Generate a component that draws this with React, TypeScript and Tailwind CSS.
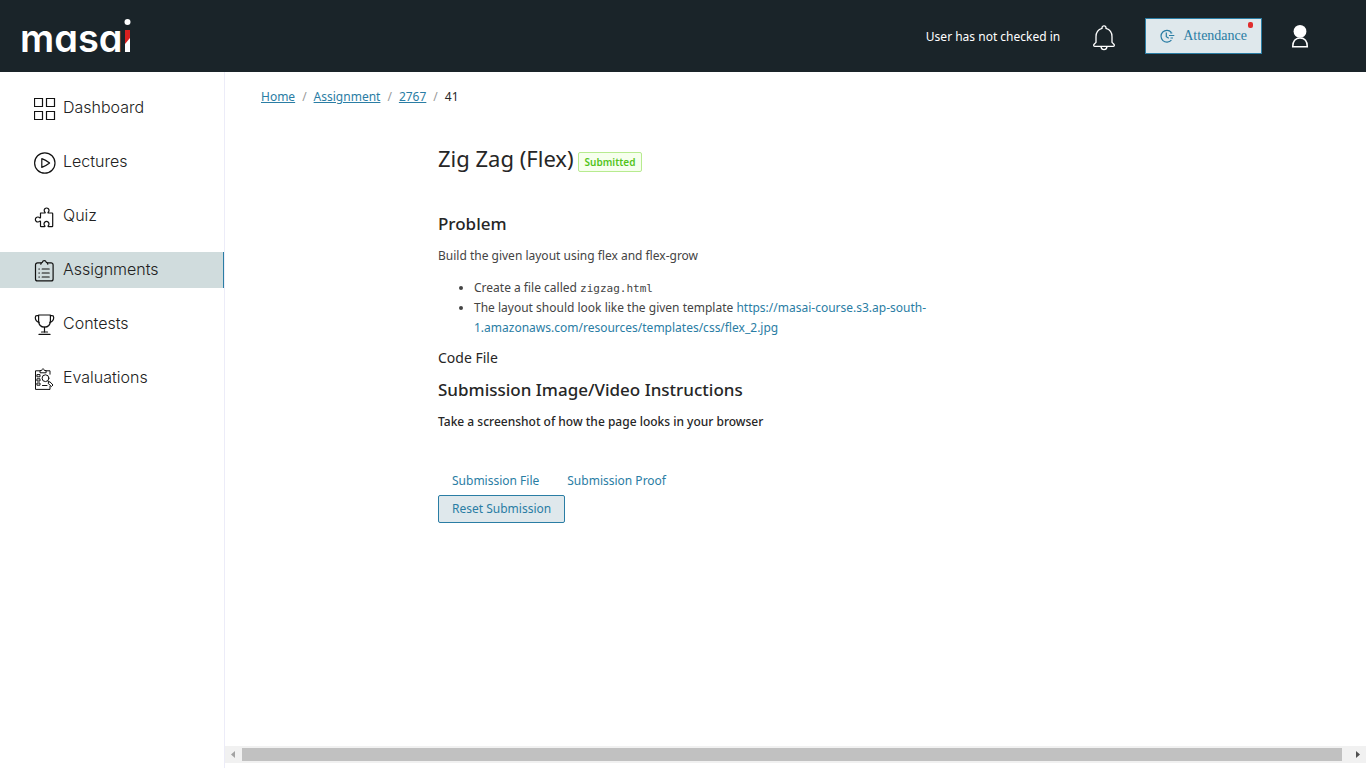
import type { ReactNode } from "react";

type IconProps = { children: ReactNode };

function Icon({ children }: IconProps) {
  return (
    <svg
      viewBox="0 0 22 22"
      className="size-[22px] shrink-0"
      fill="none"
      stroke="currentColor"
      strokeWidth="1.2"
      strokeLinecap="round"
      strokeLinejoin="round"
      aria-hidden="true"
    >
      {children}
    </svg>
  );
}

const DashboardIcon = () => (
  <Icon>
    <g strokeLinejoin="miter">
      <path d="M.5.5h8v8h-8zM12.500.5h8v8h-8zM.5 13.500h8v8h-8zM12.500 13.500h8v8h-8z" />
    </g>
  </Icon>
);

const LecturesIcon = () => (
  <Icon>
    <circle cx="10.800" cy="11" r="10.200" />
    <path d="M7.800 6.600v8.800c2.800-1 5.200-2.400 7.800-4.400C13 9 10.600 7.600 7.800 6.600z" />
  </Icon>
);

const QuizIcon = () => (
  <Icon>
    <path d="M6.500 7h4.200c.5 0 .7-.4.3-.8a2.400 2.400 0 1 1 3.200 0c-.4.4-.2.800.3.800h3.500c.4 0 .7.300.7.700v12.200c0 .4-.3.700-.7.700h-3.500c-.5 0-.7-.4-.3-.8a2.500 2.500 0 1 0-3.400 0c.4.4.2.800-.3.800H7.200c-.4 0-.7-.3-.7-.7v-4.400c0-.5-.4-.7-.8-.3a2.500 2.500 0 1 1 0-3.400c.4.4.8.200.8-.3z" />
  </Icon>
);

const AssignmentsIcon = () => (
  <Icon>
    <path d="M7 2.900H3.500a2 2 0 0 0-2 2v14a2 2 0 0 0 2 2h13.600a2 2 0 0 0 2-2v-14a2 2 0 0 0-2-2h-3.500" />
    <path d="M6.800 4.200c0-1.200.5-1.800 1.500-1.900C8.600 1.200 9.400.6 10.300.6s1.700.6 2 1.700c1 .1 1.500.7 1.500 1.900" />
    <path d="M8.200 9h7M8.200 13h7M8.200 17h7M4.900 9h.5M4.900 13h.5M4.900 17h.5" />
  </Icon>
);

const ContestsIcon = () => (
  <Icon>
    <path d="M4.600 1h11.800v6c0 3.800-2.200 6.200-5.900 6.200S4.600 10.800 4.600 7z" />
    <path d="M4.600 1.600H3c-1.100 0-1.700.7-1.700 1.800 0 2.700 1.400 4.200 3.900 5M16.400 1.600H18c1.100 0 1.700.7 1.700 1.800 0 2.700-1.400 4.200-3.900 5" />
    <path d="M10.500 13.200v5M7.500 18h6M5 20.400h11" />
  </Icon>
);

const EvaluationsIcon = () => (
  <Icon>
    <g strokeWidth="1">
      <path d="M6 2.800H1.500v18.600H16v-3M12 2.800h4v3.400" />
      <path d="M6 4.400V2.500h1.700C8 1.400 8.400.8 9 .8s1.100.6 1.400 1.700h1.700v1.900z" />
      <circle cx="11.500" cy="10.200" r="3.400" />
      <path d="m13.800 12.900 1.200 1.200m-.8.800 1.400-1.400 3.400 3.500-1.300 1.300z" />
      <path d="M3.300 6.600h2.700v2.200H3.300zM3.300 10.800h2.700V13H3.300zM3.300 15h2.700v2.200H3.300zM8.500 17.500H13" />
    </g>
  </Icon>
);

const navItems = [
  { label: "Dashboard", icon: <DashboardIcon />, active: false },
  { label: "Lectures", icon: <LecturesIcon />, active: false },
  { label: "Quiz", icon: <QuizIcon />, active: false },
  { label: "Assignments", icon: <AssignmentsIcon />, active: true },
  { label: "Contests", icon: <ContestsIcon />, active: false },
  { label: "Evaluations", icon: <EvaluationsIcon />, active: false },
];

function Logo() {
  return (
    <a href="#" aria-label="masai" className="flex items-end pt-1 text-white">
      <span className="font-['Inter',sans-serif] text-[38px] leading-10 font-semibold [font-feature-settings:'cv11']">
        masa
      </span>
      <svg viewBox="0 0 8 36" className="mb-1 h-9 w-2" aria-hidden="true">
        <circle cx="4.500" cy="4" r="3" fill="#fff" />
        <path d="M2 12h5v22H2z" fill="#fff" />
        <path d="M2 12h5v8l-5 6z" fill="#d9201f" />
      </svg>
    </a>
  );
}

function Header() {
  return (
    <header className="flex h-[72px] shrink-0 items-center justify-between bg-[#1a2429] pr-[57px] pl-5">
      <Logo />
      <div className="flex items-center text-white">
        <span className="pt-0.5 text-xs">User has not checked in</span>
        <button type="button" aria-label="Notifications" className="ml-8 pt-1">
          <svg
            viewBox="0 0 24 26"
            className="h-[26px] w-6"
            fill="none"
            stroke="currentColor"
            strokeWidth="1.3"
            strokeLinejoin="round"
            aria-hidden="true"
          >
            <path d="M10 3.400V2.800a2 2 0 0 1 4 0v.6c3.800 1.100 6 4.300 6 8.400v5.600l1.900 1.900c.9.900.3 2.100-.8 2.100H2.900c-1.100 0-1.700-1.200-.8-2.100L4 17.400v-5.600c0-4.100 2.200-7.300 6-8.400z" />
            <path d="M9 21.600c.2 1.900 1.300 3 3 3s2.800-1.100 3-3" />
          </svg>
        </button>
        <button
          type="button"
          className="relative ml-[29px] flex h-9 items-center gap-2 border border-[#2a7da4] bg-[#dfe8ec] px-3.5 font-['Liberation_Serif',serif] text-sm text-[#2a7da4]"
        >
          <svg
            viewBox="0 0 15 15"
            className="size-[15px]"
            fill="none"
            stroke="currentColor"
            strokeWidth="1.2"
            aria-hidden="true"
          >
            <path d="M11.300 3.300a5.900 5.900 0 1 0 .1 7.800M6.300 3.500v4.200l2.500 1.600M9 6.500h5.300M10.500 9h2.500M10.300 4h2" />
          </svg>
          Attendance
          <span className="absolute top-[3px] right-2 h-1.5 w-[5px] rounded-xs bg-[#e02d2d]" />
        </button>
        <button type="button" aria-label="Profile" className="ml-[29px]">
          <svg viewBox="0 0 18 24" className="h-6 w-[18px]" aria-hidden="true">
            <path
              d="M1.700 22.700c0-5.500 2.700-8.800 7.300-8.800s7.300 3.300 7.300 8.800z"
              fill="none"
              stroke="#fff"
              strokeWidth="1.5"
            />
            <circle cx="9" cy="7.400" r="6.400" fill="#fff" />
          </svg>
        </button>
      </div>
    </header>
  );
}

function Sidebar() {
  return (
    <nav className="flex w-[225px] shrink-0 flex-col gap-[18px] border-r border-[#ececf8] pt-[18px]">
      {navItems.map((item) => (
        <a
          key={item.label}
          href="#"
          aria-current={item.active ? "page" : undefined}
          className={`flex h-9 items-center gap-[7px] pl-[34px] font-['Inter',sans-serif] text-base font-light text-[#222] ${
            item.active ? "border-r border-[#2a7da4] bg-[#d0dcdd]" : ""
          }`}
        >
          <span className="pt-0.5 text-[#111]">{item.icon}</span>
          <span className="pb-0.5">{item.label}</span>
        </a>
      ))}
    </nav>
  );
}

function Breadcrumb() {
  const linkClass = "text-[#2a7da4] underline";
  return (
    <nav aria-label="Breadcrumb" className="pt-[15px] pl-9 text-xs leading-5">
      <ol className="flex gap-[7px]">
        <li><a href="#" className={linkClass}>Home</a></li>
        <li className="text-[#999]" aria-hidden="true">/</li>
        <li><a href="#" className={linkClass}>Assignment</a></li>
        <li className="text-[#999]" aria-hidden="true">/</li>
        <li><a href="#" className={linkClass}>2767</a></li>
        <li className="text-[#999]" aria-hidden="true">/</li>
        <li>41</li>
      </ol>
    </nav>
  );
}

function Assignment() {
  return (
    <article className="ml-[213px] max-w-[490px] pt-[35px] text-xs leading-5">
      <div className="flex items-center gap-1">
        <h1 className="text-[22px] leading-8">Zig Zag (Flex)</h1>
        <span className="mt-2 rounded-xs border border-[#b7eb8f] bg-[#f6ffed] px-1.5 text-[10px] leading-[18px] font-semibold text-[#52c41a]">
          Submitted
        </span>
      </div>
      <h2 className="mt-[38px] text-[17px] leading-6 font-medium">Problem</h2>
      <p className="mt-2.5 text-[#444]">Build the given layout using flex and flex-grow</p>
      <ul className="mt-3 list-disc pl-9 text-[#444]">
        <li>
          Create a file called{" "}
          <code className="font-['DejaVu_Sans_Mono',monospace] text-[11px] leading-none">zigzag.html</code>
        </li>
        <li>
          The layout should look like the given template{" "}
          <a href="#" className="text-[#2a7da4]">
            https://masai-course.s3.ap-south-1.amazonaws.com/resources/templates/css/flex_2.jpg
          </a>
        </li>
      </ul>
      <h4 className="mt-2.5 text-sm leading-5">Code File</h4>
      <h2 className="mt-2.5 text-[17px] leading-6 font-medium">Submission Image/Video Instructions</h2>
      <p className="mt-2.5 font-medium">Take a screenshot of how the page looks in your browser</p>
      <div className="mt-[35px] flex gap-7 pl-3.5 leading-7 text-[#2a7da4]">
        <a href="#">Submission File</a>
        <a href="#">Submission Proof</a>
      </div>
      <button
        type="button"
        className="h-7 rounded-xs border border-[#2a7da4] bg-[#dfe8ec] px-[13px] text-[#2a7da4]"
      >
        Reset Submission
      </button>
    </article>
  );
}

function HorizontalScrollbar() {
  return (
    <div className="mt-auto mb-[5px] flex h-[17px] items-center bg-[#f1f1f1]" aria-hidden="true">
      <svg viewBox="0 0 17 17" className="size-[17px] shrink-0">
        <path d="M10 5v7L6 8.500z" fill="#a3a3a3" />
      </svg>
      <div className="h-[13px] flex-1 bg-[#c1c1c1]" />
      <div className="w-[7px]" />
      <svg viewBox="0 0 17 17" className="size-[17px] shrink-0">
        <path d="M7 5v7l4-3.500z" fill="#505050" />
      </svg>
    </div>
  );
}

export default function App() {
  return (
    <div className="flex min-h-screen flex-col bg-white font-['Noto_Sans',sans-serif] text-[#262626]">
      <Header />
      <div className="flex flex-1">
        <Sidebar />
        <main className="flex min-w-0 flex-1 flex-col">
          <Breadcrumb />
          <Assignment />
          <HorizontalScrollbar />
        </main>
      </div>
    </div>
  );
}
